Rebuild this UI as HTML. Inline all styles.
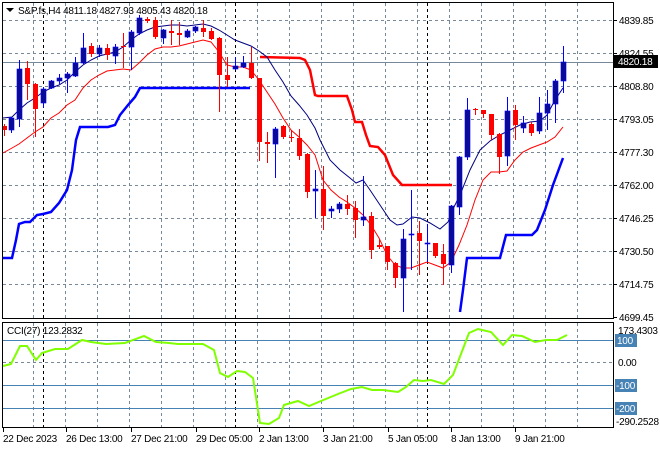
<!DOCTYPE html>
<html><head><meta charset="utf-8"><style>
html,body{margin:0;padding:0;background:#fff;}
svg{display:block;font-family:"Liberation Sans",sans-serif;font-size:10px;letter-spacing:-0.25px;}
</style></head><body>
<svg width="660" height="450" viewBox="0 0 660 450" xmlns="http://www.w3.org/2000/svg">
<rect width="660" height="450" fill="#fff"/>
<g stroke="#778899" stroke-width="1" stroke-dasharray="3,3" fill="none">
<path d="M3 20.5H613M3 53.5H613M3 86.5H613M3 119.5H613M3 152.5H613M3 185.5H613M3 218.5H613M3 251.5H613M3 284.5H613"/>
<path d="M33.5 3V318M65.5 3V318M97.5 3V318M129.5 3V318M161.5 3V318M193.5 3V318M225.5 3V318M257.5 3V318M289.5 3V318M321.5 3V318M353.5 3V318M385.5 3V318M417.5 3V318M449.5 3V318M481.5 3V318M513.5 3V318M545.5 3V318M577.5 3V318"/>
<path d="M33.5 323V427M65.5 323V427M97.5 323V427M129.5 323V427M161.5 323V427M193.5 323V427M225.5 323V427M257.5 323V427M289.5 323V427M321.5 323V427M353.5 323V427M385.5 323V427M417.5 323V427M449.5 323V427M481.5 323V427M513.5 323V427M545.5 323V427M577.5 323V427"/>
<path d="M3 362.5H613"/>
</g>
<g stroke="#000" stroke-width="1" stroke-dasharray="3,3" fill="none">
<path d="M43.5 3V318M235.5 3V318M427.5 3V318M43.5 323V427M235.5 323V427M427.5 323V427"/>
</g>
<path d="M3 62.5H613" stroke="#778899" stroke-width="1"/>
<polyline fill="none" stroke="#0000ff" stroke-width="2.5" points="3,258 12,258 16,240 19,224 25,222 30,222 37,215 43,214 51,212 59,203 67,190 72,170 76,140 80,127 83,127 108,127 115,125 120,115 128,105 135,97 140,88 143,88 250,88"/>
<polyline fill="none" stroke="#0000ff" stroke-width="2.5" points="460,312 463,290 467,258 475,258 500,258 506,235 532,235 537,230 545,210 553,185 563,158"/>
<polyline fill="none" stroke="#ff0000" stroke-width="2.5" points="260,57 300,58 305,60 310,70 315,95 318,96 347,96 352,110 355,122 362,122 366,135 370,146 378,147 385,155 393,175 402,185 452,185"/>
<polyline fill="none" stroke="#000080" stroke-width="1" points="3,118 12,117 19,110 27,103 35,98 43,92 51,88 59,85 67,80 75,72 83,65 91,60 99,56 107,54 115,52 123,47 131,40 139,34 147,30 155,27 163,26 171,25 179,25 187,26 195,25 203,24 211,26 219,30 227,35 235,40 243,43 251,46 259,51 267,57 275,70 283,82 291,96 299,105 307,115 315,128 320,140 330,160 340,170 350,178 356,183 363,180 370,190 380,205 390,220 397,225 403,224 412,217 420,218 430,223 440,229 448,222 453,209 460,195 470,170 480,150 490,141 500,135 510,130 520,125 530,122 540,121 547,115 555,100 563,88"/>
<polyline fill="none" stroke="#ff0000" stroke-width="1" points="3,153 12,148 19,144 27,138 35,132 43,127 51,118 59,113 67,105 75,100 83,88 91,80 99,75 107,71 115,70 123,69 131,70 139,63 147,55 155,49 163,47 171,47 179,46 187,44 195,42 203,40 211,42 219,52 227,65 235,67 243,67 251,70 259,80 267,92 275,104 283,118 291,130 299,137 307,145 315,155 323,180 331,190 339,197 347,202 355,208 363,215 371,225 379,238 387,255 395,265 403,268 411,268 419,265 427,262 435,265 443,268 451,262 459,245 467,225 475,200 483,180 491,172 499,172 507,171 515,160 523,152 531,148 539,145 547,142 555,137 563,127"/>
<path stroke="#ff0000" stroke-width="1" fill="none" d="M4.5 124V136M27.5 61V100M35.5 83V137M91.5 43V57M107.5 44V60M123.5 33V68M147.5 17V23M155.5 17V39M171.5 20V45M179.5 22V45M203.5 20V37M211.5 28V40M219.5 37V112M227.5 57V87M251.5 47V79M259.5 78V161M267.5 132V163M283.5 125V139M291.5 130V142M299.5 129V160M307.5 153V198M323.5 166V230M347.5 195V215M355.5 201V238M371.5 212V259M379.5 239V249M387.5 246V270M395.5 262V288M419.5 221V275M435.5 243V258M443.5 244V285M475.5 108V115M483.5 110V118M491.5 114V140M499.5 133V174M515.5 105V140M531.5 122V136"/>
<path stroke="#0000ff" stroke-width="1" fill="none" d="M11.5 117V133M19.5 60V127M43.5 87V108M51.5 80V89M59.5 74V84M67.5 72V93M75.5 57V77M83.5 33V64M99.5 45V57M115.5 44V64M131.5 30V70M139.5 15V35M163.5 29V44M187.5 29V38M195.5 26V33M235.5 57V70M243.5 56V68M275.5 127V178M315.5 170V218M331.5 206V218M339.5 202V213M363.5 176V226M403.5 229V312M411.5 190V270M427.5 224V262M451.5 205V273M459.5 156V215M467.5 98V160M507.5 97V166M523.5 116V133M539.5 97V134M547.5 90V130M555.5 79V123M563.5 46V93"/>
<g fill="#ff0000">
<rect x="2" y="126" width="5" height="4"/><rect x="25" y="68" width="5" height="16"/><rect x="33" y="84" width="5" height="25"/><rect x="89" y="46" width="5" height="8"/><rect x="105" y="48" width="5" height="7"/><rect x="121" y="46" width="5" height="1"/><rect x="145" y="19" width="5" height="2"/><rect x="153" y="20" width="5" height="17"/><rect x="169" y="31" width="5" height="2"/><rect x="177" y="33" width="5" height="2"/><rect x="201" y="28" width="5" height="4"/><rect x="209" y="31" width="5" height="8"/><rect x="217" y="38" width="5" height="37"/><rect x="225" y="75" width="5" height="5"/><rect x="249" y="63" width="5" height="15"/><rect x="257" y="78" width="5" height="64"/><rect x="265" y="142" width="5" height="2"/><rect x="281" y="126" width="5" height="11"/><rect x="289" y="137" width="5" height="1"/><rect x="297" y="138" width="5" height="18"/><rect x="305" y="154" width="5" height="38"/><rect x="321" y="189" width="5" height="27"/><rect x="345" y="204" width="5" height="5"/><rect x="353" y="208" width="5" height="12"/><rect x="369" y="216" width="5" height="34"/><rect x="377" y="245" width="5" height="2"/><rect x="385" y="246" width="5" height="16"/><rect x="393" y="263" width="5" height="15"/><rect x="417" y="233" width="5" height="8"/><rect x="433" y="243" width="5" height="13"/><rect x="441" y="254" width="5" height="10"/><rect x="473" y="109" width="5" height="1"/><rect x="481" y="110" width="5" height="4"/><rect x="489" y="114" width="5" height="21"/><rect x="497" y="134" width="5" height="23"/><rect x="513" y="110" width="5" height="15"/><rect x="529" y="124" width="5" height="9"/>
</g>
<g fill="#0a0a96" stroke="#0000ff" stroke-width="0.6">
<rect x="9" y="118" width="5" height="12"/><rect x="17" y="69" width="5" height="50"/><rect x="41" y="89" width="5" height="14"/><rect x="49" y="81" width="5" height="7"/><rect x="57" y="78" width="5" height="3"/><rect x="65" y="74" width="5" height="4"/><rect x="73" y="63" width="5" height="13"/><rect x="81" y="48" width="5" height="15"/><rect x="97" y="48" width="5" height="6"/><rect x="113" y="47" width="5" height="9"/><rect x="129" y="32" width="5" height="15"/><rect x="137" y="18" width="5" height="15"/><rect x="161" y="30" width="5" height="8"/><rect x="185" y="31" width="5" height="6"/><rect x="193" y="27" width="5" height="4"/><rect x="233" y="66" width="5" height="3"/><rect x="241" y="63" width="5" height="4"/><rect x="273" y="129" width="5" height="15"/><rect x="313" y="189" width="5" height="2"/><rect x="329" y="209" width="5" height="2"/><rect x="337" y="204" width="5" height="5"/><rect x="361" y="217" width="5" height="3"/><rect x="401" y="239" width="5" height="39"/><rect x="409" y="234" width="5" height="1"/><rect x="425" y="243" width="5" height="1"/><rect x="449" y="206" width="5" height="59"/><rect x="457" y="157" width="5" height="50"/><rect x="465" y="110" width="5" height="47"/><rect x="505" y="111" width="5" height="45"/><rect x="521" y="123" width="5" height="5"/><rect x="537" y="113" width="5" height="18"/><rect x="545" y="104" width="5" height="9"/><rect x="553" y="81" width="5" height="23"/><rect x="561" y="62" width="5" height="19"/>
</g>
<path d="M3 340.5H613M3 385.5H613M3 408.5H613" stroke="#4682b4" stroke-width="1"/>
<polyline fill="none" stroke="#7fff00" stroke-width="2" points="3,366 11,364 20,346 27,346 36,360 42,353 55,349 68,349 82,340 91,342 106,344 125,343 133,340 144,336 156,342 169,343 178,344 203,344 214,350 220,373 228,377 237,371 245,372 253,378 260,423 269,424 279,418 284,405 298,401 309,406 321,401 338,394 351,389 362,387 372,390 383,390 398,392 406,387 414,380 423,381 431,380 444,384 453,375 469,333 478,329 491,332 503,345 512,335 522,336 535,342 546,340 557,340 567,335"/>
<rect x="2.5" y="2.5" width="611" height="316" fill="none" stroke="#000"/>
<rect x="2.5" y="322.5" width="611" height="105" fill="none" stroke="#000"/>
<path d="M6 8H14L10 12Z" fill="#000"/>
<text x="18" y="14" fill="#000">S&amp;P.fs,H4  4811.18 4827.93 4805.43 4820.18</text>
<text x="7" y="334" fill="#000">CCI(27) 123.2832</text>
<g stroke="#000"><path d="M614 20.5h3M614 53.5h3M614 86.5h3M614 119.5h3M614 152.5h3M614 185.5h3M614 218.5h3M614 251.5h3M614 284.5h3M614 317.5h3"/></g>
<g fill="#000">
<text x="619" y="24">4839.85</text><text x="619" y="57">4824.55</text><text x="619" y="90">4808.80</text><text x="619" y="123">4793.05</text><text x="619" y="156">4777.30</text><text x="619" y="189">4762.00</text><text x="619" y="222">4746.25</text><text x="619" y="255">4730.50</text><text x="619" y="288">4714.75</text><text x="619" y="321">4699.45</text>
<text x="618" y="334">173.4303</text><text x="618" y="366">0.00</text><text x="616" y="425">-290.2528</text>
</g>
<rect x="614" y="55" width="44" height="13" fill="#000"/>
<text x="618" y="65" fill="#fff">4820.18</text>
<rect x="615" y="334" width="22" height="13" fill="#4682b4"/><text x="617" y="344" fill="#fff">100</text>
<rect x="615" y="379" width="22" height="13" fill="#4682b4"/><text x="616" y="389" fill="#fff">-100</text>
<rect x="615" y="402" width="22" height="13" fill="#4682b4"/><text x="616" y="412" fill="#fff">-200</text>
<g stroke="#000"><path d="M3.5 428v4M66.5 428v4M131.5 428v4M196.5 428v4M259.5 428v4M323.5 428v4M388.5 428v4M451.5 428v4M515.5 428v4"/></g>
<g fill="#000">
<text x="3" y="442">22 Dec 2023</text><text x="66" y="442">26 Dec 13:00</text><text x="131" y="442">27 Dec 21:00</text><text x="196" y="442">29 Dec 05:00</text><text x="259" y="442">2 Jan 13:00</text><text x="323" y="442">3 Jan 21:00</text><text x="388" y="442">5 Jan 05:00</text><text x="451" y="442">8 Jan 13:00</text><text x="515" y="442">9 Jan 21:00</text>
</g>
</svg>
</body></html>
